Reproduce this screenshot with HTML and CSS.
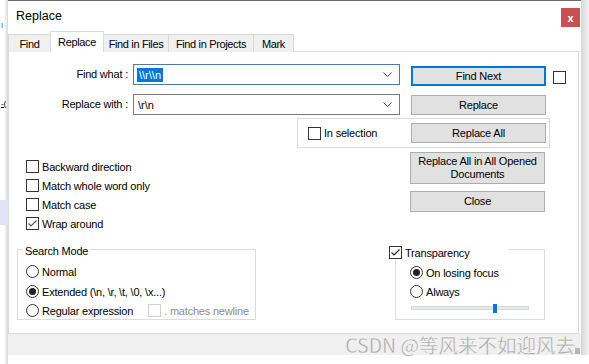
FILE: index.html
```html
<!DOCTYPE html>
<html lang="en">
<head>
    <meta charset="UTF-8">
    <title>Replace</title>
    <link rel="stylesheet" href="styles.css">
</head>
<body>
<div class="screen">
    <div class="editor-edge">
        <div class="ed-line ed-first">I</div>
        <div class="ed-line ed-under">-(</div>
        <div class="ed-band"></div>
    </div>

    <div class="dialog">
        <div class="titlebar">
            <span class="title">Replace</span>
            <span class="close">x</span>
        </div>

        <div class="tabs">
            <span class="tab w-find">Find</span>
            <span class="tab tab-active w-replace">Replace</span>
            <span class="tab w-files">Find in Files</span>
            <span class="tab w-projects">Find in Projects</span>
            <span class="tab w-mark">Mark</span>
        </div>

        <div class="panel">
            <div class="field-row row-find">
                <label class="field-label">Find what :</label>
                <div class="combo combo-focus">
                    <span class="sel-text">\\r\\n</span>
                    <svg class="chevron" width="9" height="5" viewBox="0 0 9 5"><path d="M0.5 0.5 L4.5 4.5 L8.5 0.5" fill="none" stroke="#444" stroke-width="1"/></svg>
                </div>
                <span class="btn btn-default">Find Next</span>
                <span class="box side-box"></span>
            </div>
            <div class="field-row row-replace">
                <label class="field-label">Replace with :</label>
                <div class="combo">
                    <span class="plain-text">\r\n</span>
                    <svg class="chevron" width="9" height="5" viewBox="0 0 9 5"><path d="M0.5 0.5 L4.5 4.5 L8.5 0.5" fill="none" stroke="#444" stroke-width="1"/></svg>
                </div>
                <span class="btn">Replace</span>
            </div>

            <div class="selection-group">
                <span class="check"><span class="box"></span>In selection</span>
                <span class="btn">Replace All</span>
            </div>

            <div class="middle">
                <div class="options">
                    <span class="check"><span class="box"></span>Backward direction</span>
                    <span class="check"><span class="box"></span>Match whole word only</span>
                    <span class="check"><span class="box"></span>Match case</span>
                    <span class="check"><span class="box"><svg width="11" height="11" viewBox="0 0 11 11"><path d="M1.5 5.5 L4 8 L9.5 2.5" fill="none" stroke="#555" stroke-width="1.2"/></svg></span>Wrap around</span>
                </div>
                <div class="side-buttons">
                    <span class="btn btn-tall">Replace All in All Opened<br>Documents</span>
                    <span class="btn">Close</span>
                </div>
            </div>

            <div class="bottom">
                <div class="group mode-group">
                    <span class="legend">Search Mode</span>
                    <span class="radio"><span class="dot"></span>Normal</span>
                    <span class="radio"><span class="dot dot-on"></span>Extended (\n, \r, \t, \0, \x...)</span>
                    <div class="radio-line">
                        <span class="radio"><span class="dot"></span>Regular expression</span>
                        <span class="check check-off"><span class="box"></span>. matches newline</span>
                    </div>
                </div>
                <div class="group trans-group">
                    <span class="legend legend-check"><span class="box"><svg width="11" height="11" viewBox="0 0 11 11"><path d="M1.5 5.5 L4 8 L9.5 2.5" fill="none" stroke="#222" stroke-width="1.2"/></svg></span>Transparency</span>
                    <span class="radio"><span class="dot dot-on"></span>On losing focus</span>
                    <span class="radio"><span class="dot"></span>Always</span>
                    <div class="slider"><span class="thumb"></span></div>
                </div>
            </div>
        </div>

        <div class="statusbar">
            <span class="watermark">CSDN @等风来不如迎风去</span>
            <span class="grip"></span>
        </div>
    </div>

    <div class="shadow-right"></div>
</div>
</body>
</html>
```

FILE: styles.css
```css
* { box-sizing: border-box; }
body { margin: 0; background: #fff; font-family: "Liberation Sans", Arial, sans-serif; font-size: 11px; letter-spacing: -0.2px; color: #000; white-space: nowrap; }
.screen { display: grid; grid-template-columns: 8px 573px 8px; width: 589px; height: 364px; overflow: hidden; }

/* editor behind the dialog */
.editor-edge { background: linear-gradient(to right, #fff 0, #fff 4px, #e4e4e4 7px, #d4d4d4 8px); overflow: hidden; }
.ed-line { font-size: 8px; line-height: 9px; padding-left: 1px; }
.ed-first { margin-top: 21px; color: #2a6f8f; }
.ed-under { margin-top: 69px; text-decoration: underline; }
.ed-band { margin-top: 92px; height: 25px; background: #e2e2f6; }

.dialog { display: flex; flex-direction: column; height: 355px; background: #fff; border-top: 1px solid #6b6b6b; }
.shadow-right { height: 355px; background: linear-gradient(to right, #d6d6d6, #f4f4f4); }

.titlebar { height: 30px; display: flex; justify-content: space-between; align-items: flex-start; }
.title { font-size: 12.5px; letter-spacing: 0; margin: 8px 0 0 8px; }
.close { width: 19px; height: 19px; margin: 7px 1px 0 0; background: #c75050; color: #fff; font-weight: bold; font-size: 11px; display: flex; align-items: center; justify-content: center; }

.tabs { display: flex; align-items: flex-end; height: 21px; position: relative; z-index: 1; }
.tab { height: 18px; background: #f0f0f0; border: 1px solid #d9d9d9; border-bottom: none; margin-right: -1px; letter-spacing: -0.35px; text-align: center; padding-top: 3px; }
.tab-active { height: 21px; background: #fff; padding-top: 4px; }
.w-find { width: 43px; }
.w-replace { width: 54px; }
.w-files { width: 66px; }
.w-projects { width: 86px; }
.w-mark { width: 41px; }

.panel { height: 283px; width: 571px; border: 1px solid #d9d9d9; margin-top: -1px; padding-top: 12px; }

/* find / replace fields */
.field-row { display: flex; align-items: flex-start; }
.row-replace { margin-top: 8px; }
.field-label { width: 119px; text-align: right; margin-right: 5px; padding-top: 4px; }
.combo { width: 267px; height: 21px; border: 1px solid #7a7a7a; display: flex; align-items: center; padding-left: 3px; }
.combo-focus { border-color: #4d7aa6; }
.sel-text { background: #0078d7; color: #fff; padding: 1px 2px; letter-spacing: 0; }
.plain-text { padding-left: 1px; letter-spacing: 0; }
.chevron { margin-left: auto; margin-right: 7px; }

.btn { width: 135px; height: 20px; background: #e1e1e1; border: 1px solid #adadad; display: flex; align-items: center; justify-content: center; text-align: center; line-height: 13px; }
.row-find .btn { margin: 2px 0 0 11px; }
.row-replace .btn { margin: 1px 0 0 11px; }
.btn-default { border: 2px solid #0078d7; }
.side-box { margin: 7px 0 0 7px; }

.box { width: 13px; height: 13px; border: 1px solid #333; background: #fff; display: inline-flex; align-items: center; justify-content: center; flex: none; margin-right: 3px; }
.check { display: flex; align-items: center; }
.check-off { color: #8c8c8c; }
.check-off .box { border-color: #cfcfcf; }

.selection-group { margin: 3px 0 0 288px; width: 253px; height: 30px; border: 1px solid #dcdcdc; display: flex; align-items: center; padding: 0 3px 0 10px; justify-content: space-between; }

.middle { display: flex; justify-content: space-between; }
.options { display: flex; flex-direction: column; gap: 6px; margin: 12px 0 0 17px; }
.side-buttons { display: flex; flex-direction: column; gap: 7px; margin: 4px 33px 0 0; }
.btn-tall { height: 32px; }
.side-buttons .btn:last-child { height: 21px; }

.bottom { display: flex; margin-top: 19px; }
.group { border: 1px solid #dcdcdc; display: flex; flex-direction: column; gap: 6px; }
.legend { background: #fff; align-self: flex-start; padding: 0 2px; display: flex; align-items: center; height: 13px; }
.mode-group { width: 239px; height: 71px; margin-left: 8px; padding-left: 8px; }
.mode-group .legend { margin: -6px 0 2px -3px; }
.mode-group .radio:nth-child(3) { margin-top: 1px; }
.radio { display: flex; align-items: center; }
.dot { width: 13px; height: 13px; border: 1px solid #333; border-radius: 50%; margin-right: 3px; display: inline-flex; align-items: center; justify-content: center; flex: none; }
.dot-on::after { content: ""; width: 7px; height: 7px; border-radius: 50%; background: #222; }
.radio-line { display: flex; align-items: center; }
.radio-line .check { margin-left: 15px; }

.trans-group { width: 150px; height: 71px; margin-left: 139px; padding-left: 14px; }
.trans-group .legend { margin: -4px 0 1px -21px; padding: 0 39px 0 0; }
.slider { width: 118px; height: 4px; background: #e7eaea; border: 1px solid #d6d6d6; margin: 2px 0 0 1px; display: flex; align-items: center; }
.thumb { width: 4px; height: 9px; background: #0078d7; margin-left: 81px; }

.statusbar { flex: 1; background: #f0f0f0; display: flex; justify-content: flex-end; align-items: flex-end; }
.watermark { font-family: "Noto Sans CJK SC", "Liberation Sans", sans-serif; font-size: 19.5px; letter-spacing: 0; color: #a9a9a9; line-height: 21px; -webkit-text-stroke: 0.3px #fff; }
.grip { width: 5px; height: 6px; margin: 0 1px 1px 0; background: radial-gradient(circle, #b6b6b6 0.8px, transparent 1px) 0 0 / 2px 2px; }
```
